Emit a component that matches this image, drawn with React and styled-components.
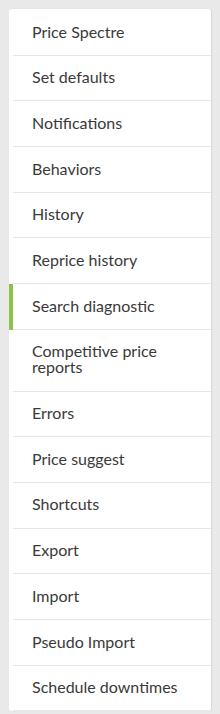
import React from "react";
import styled, { createGlobalStyle } from "styled-components";

const Global = createGlobalStyle`
  html, body { margin: 0; padding: 0; background: #e9e9ea; }
  body { font-family: Lato, "Open Sans", sans-serif; }
`;

const Page = styled.div`
  padding: 9px 9px 0 9px;
`;

const Card = styled.nav`
  background: #ffffff;
  border-radius: 3px;
  box-shadow: 1px 0 1px rgba(0, 0, 0, 0.08);
  display: flex;
  flex-direction: column;
  padding-top: 1px;
  overflow: hidden;
`;

const Item = styled.div`
  border-left: 4px solid ${(p) => (p.$active ? "#8bc34a" : "transparent")};
  cursor: pointer;
`;

const Label = styled.div`
  padding: 13.6px 12px 15.1px 19px;
  border-bottom: 1px solid #e6e6e6;
  font-size: 16px;
  font-weight: 400;
  line-height: 16px;
  color: #3a3a3a;
`;

const items = [
  "Price Spectre",
  "Set defaults",
  "Notifications",
  "Behaviors",
  "History",
  "Reprice history",
  "Search diagnostic",
  "Competitive price reports",
  "Errors",
  "Price suggest",
  "Shortcuts",
  "Export",
  "Import",
  "Pseudo Import",
  "Schedule downtimes",
];

export default function App() {
  return (
    <>
      <Global />
      <Page>
        <Card>
          {items.map((t) => (
            <Item key={t} $active={t === "Search diagnostic"}>
              <Label>{t}</Label>
            </Item>
          ))}
        </Card>
      </Page>
    </>
  );
}
